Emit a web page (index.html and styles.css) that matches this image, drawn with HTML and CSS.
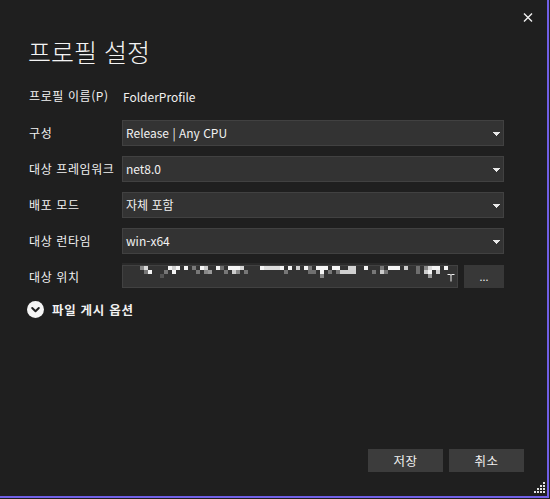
FILE: index.html
```html
<!DOCTYPE html>
<html lang="ko">
<head>
<meta charset="utf-8">
<title>프로필 설정</title>
<link rel="stylesheet" href="styles.css">
</head>
<body>
<div class="frame">
  <div class="topbar">
    <button class="close" aria-label="닫기">
      <svg width="10" height="9" viewBox="0 0 10 9"><path d="M1 0.5 L9 8.5 M9 0.5 L1 8.5" stroke="#f0f0f0" stroke-width="1.4" fill="none"/></svg>
    </button>
  </div>
  <h1 class="title">프로필 설정</h1>
  <div class="form">
    <div class="row row-name">
      <span class="label">프로필 이름(P)</span>
      <span class="value">FolderProfile</span>
    </div>
    <div class="row">
      <span class="label">구성</span>
      <div class="select"><span class="sel-text">Release | Any CPU</span><svg class="arrow" width="7" height="4" viewBox="0 0 7 4"><path d="M0 0 H7 V1 H6 V2 H5 V3 H4 V4 H3 V3 H2 V2 H1 V1 H0 Z" fill="#e8e8e8"/></svg></div>
    </div>
    <div class="row">
      <span class="label">대상 프레임워크</span>
      <div class="select"><span class="sel-text">net8.0</span><svg class="arrow" width="7" height="4" viewBox="0 0 7 4"><path d="M0 0 H7 V1 H6 V2 H5 V3 H4 V4 H3 V3 H2 V2 H1 V1 H0 Z" fill="#e8e8e8"/></svg></div>
    </div>
    <div class="row">
      <span class="label">배포 모드</span>
      <div class="select"><span class="sel-text">자체 포함</span><svg class="arrow" width="7" height="4" viewBox="0 0 7 4"><path d="M0 0 H7 V1 H6 V2 H5 V3 H4 V4 H3 V3 H2 V2 H1 V1 H0 Z" fill="#e8e8e8"/></svg></div>
    </div>
    <div class="row">
      <span class="label">대상 런타임</span>
      <div class="select"><span class="sel-text">win-x64</span><svg class="arrow" width="7" height="4" viewBox="0 0 7 4"><path d="M0 0 H7 V1 H6 V2 H5 V3 H4 V4 H3 V3 H2 V2 H1 V1 H0 Z" fill="#e8e8e8"/></svg></div>
    </div>
    <div class="row row-loc">
      <span class="label">대상 위치</span>
      <div class="loc-field">
        <div class="loc-wrap">
          <div class="textbox">
            <svg class="ibeam" width="8" height="8" viewBox="0 0 8 8"><path d="M0.5 0.5 H3 M5 0.5 H7.5 M3 0.5 Q4 0.5 4 1.5 Q4 0.5 5 0.5 M4 1.5 V7.5" stroke="#f0f0f0" stroke-width="1" fill="none"/></svg>
          </div>
          <svg class="mosaic" width="326" height="16" viewBox="122 264 326 16">
            <rect x="122" y="264" width="326" height="2" fill="#2a2a2a"/>
            <g fill="#f4f4f4">
              <rect x="144" y="267" width="4" height="4" fill="#d8d8d8"/>
              <rect x="140" y="267" width="4" height="4" fill="#8a8a8a"/>
              <rect x="168" y="267" width="4" height="4"/>
              <rect x="172" y="267" width="4" height="4" fill="#cfcfcf"/>
              <rect x="176" y="267" width="4" height="4"/>
              <rect x="184" y="267" width="4" height="4"/>
              <rect x="192" y="267" width="4" height="4" fill="#7a7a7a"/>
              <rect x="200" y="267" width="4" height="4"/>
              <rect x="204" y="267" width="4" height="4" fill="#cccccc"/>
              <rect x="216" y="267" width="4" height="4"/>
              <rect x="220" y="267" width="4" height="4" fill="#6e6e6e"/>
              <rect x="228" y="267" width="12" height="4"/>
              <rect x="240" y="267" width="4" height="4" fill="#d6d6d6"/>
              <rect x="260" y="267" width="4" height="4"/>
              <rect x="264" y="267" width="16" height="4" fill="#dcdcdc"/>
              <rect x="280" y="267" width="4" height="4"/>
              <rect x="288" y="267" width="4" height="4"/>
              <rect x="296" y="267" width="4" height="4" fill="#cfcfcf"/>
              <rect x="304" y="267" width="4" height="4"/>
              <rect x="308" y="267" width="4" height="4" fill="#7a7a7a"/>
              <rect x="316" y="267" width="12" height="4"/>
              <rect x="332" y="267" width="8" height="4"/>
              <rect x="348" y="267" width="8" height="4" fill="#d4d4d4"/>
              <rect x="364" y="267" width="4" height="4"/>
              <rect x="380" y="267" width="4" height="4" fill="#777777"/>
              <rect x="388" y="267" width="12" height="4"/>
              <rect x="404" y="267" width="4" height="4" fill="#cccccc"/>
              <rect x="416" y="267" width="4" height="4" fill="#6e6e6e"/>
              <rect x="424" y="267" width="4" height="4" fill="#888888"/>
              <rect x="428" y="267" width="4" height="4" fill="#dddddd"/>
              <rect x="432" y="267" width="8" height="4"/>
              <rect x="444" y="267" width="4" height="4"/>
              <rect x="144" y="271" width="4" height="4" fill="#777777"/>
              <rect x="148" y="271" width="4" height="4"/>
              <rect x="164" y="271" width="4" height="4" fill="#777777"/>
              <rect x="172" y="271" width="4" height="4"/>
              <rect x="196" y="271" width="4" height="4" fill="#777777"/>
              <rect x="204" y="271" width="4" height="4" fill="#888888"/>
              <rect x="208" y="271" width="4" height="4" fill="#999999"/>
              <rect x="224" y="271" width="4" height="4" fill="#777777"/>
              <rect x="232" y="271" width="4" height="4" fill="#cccccc"/>
              <rect x="236" y="271" width="4" height="4" fill="#888888"/>
              <rect x="244" y="271" width="4" height="4" fill="#777777"/>
              <rect x="284" y="271" width="4" height="4" fill="#777777"/>
              <rect x="308" y="271" width="8" height="4" fill="#707070"/>
              <rect x="320" y="271" width="4" height="4"/>
              <rect x="328" y="271" width="4" height="4" fill="#777777"/>
              <rect x="336" y="271" width="4" height="4" fill="#777777"/>
              <rect x="340" y="271" width="16" height="4" fill="#d0d0d0"/>
              <rect x="372" y="271" width="4" height="4" fill="#777777"/>
              <rect x="380" y="271" width="4" height="4" fill="#cccccc"/>
              <rect x="384" y="271" width="4" height="4" fill="#777777"/>
              <rect x="416" y="271" width="4" height="4" fill="#6e6e6e"/>
              <rect x="424" y="271" width="4" height="4" fill="#cccccc"/>
              <rect x="428" y="271" width="4" height="4"/>
              <rect x="436" y="271" width="4" height="4" fill="#d0d0d0"/>
              <rect x="160" y="275" width="4" height="4" fill="#555555"/>
              <rect x="320" y="275" width="4" height="4" fill="#888888"/>
              <rect x="428" y="275" width="4" height="4" fill="#999999"/>
            </g>
          </svg>
        </div>
        <button class="browse">...</button>
      </div>
    </div>
    <div class="expander">
      <svg class="chev" width="17" height="17" viewBox="0 0 17 17"><circle cx="8.5" cy="8.5" r="8.5" fill="#f4f4f4"/><path d="M5.2 7 L8.5 10.2 L11.8 7" stroke="#1f1f1f" stroke-width="2" fill="none" stroke-linecap="round" stroke-linejoin="round"/></svg>
      <span class="exp-text">파일 게시 옵션</span>
    </div>
  </div>
  <div class="footer">
    <button class="btn">저장</button>
    <button class="btn">취소</button>
  </div>
  <svg class="grip" width="12" height="12" viewBox="0 0 12 12">
    <g fill="#e0e0e0">
      <rect x="9" y="0" width="2" height="2"/>
      <rect x="6" y="3" width="2" height="2"/><rect x="9" y="3" width="2" height="2"/>
      <rect x="3" y="6" width="2" height="2"/><rect x="6" y="6" width="2" height="2"/><rect x="9" y="6" width="2" height="2"/>
      <rect x="0" y="9" width="2" height="2"/><rect x="3" y="9" width="2" height="2"/><rect x="6" y="9" width="2" height="2"/><rect x="9" y="9" width="2" height="2"/>
    </g>
  </svg>
</div>
</body>
</html>
```
FILE: styles.css
```css
* { box-sizing: border-box; }
html, body {
  margin: 0;
  padding: 0;
  background: #1f1f1f;
  width: 550px;
  height: 499px;
  overflow: hidden;
}
body {
  font-family: "Noto Sans CJK KR", "Noto Sans", sans-serif;
  color: #f1f1f1;
  font-size: 12px;
}
.frame {
  position: relative;
  width: 549px;
  height: 498px;
  border-right: 2px solid #7160e6;
  border-bottom: 2px solid #7160e6;
  display: flex;
  flex-direction: column;
}
.topbar {
  display: flex;
  justify-content: flex-end;
  padding: 12px 13px 0 0;
  height: 22px;
}
.close {
  width: 12px;
  height: 10px;
  padding: 0;
  border: 0;
  background: transparent;
  display: flex;
  align-items: center;
  justify-content: center;
}
.title {
  margin: 13px 0 0 28px;
  font-size: 25px;
  font-weight: 300;
  line-height: 32px;
  letter-spacing: 0;
  color: #f4f4f4;
}
.form {
  display: flex;
  flex-direction: column;
  padding-left: 29px;
  margin-top: 19px;
}
.row {
  display: grid;
  grid-template-columns: 93px 382px;
  align-items: center;
  height: 26px;
  margin-bottom: 10px;
}
.row-name {
  height: 20px;
  margin-bottom: 14px;
}
.label {
  font-size: 12px;
  line-height: 16px;
  letter-spacing: 0.6px;
  white-space: nowrap;
}
.value {
  font-size: 12px;
  padding-left: 1px;
}
.select {
  height: 26px;
  background: #333333;
  border: 1px solid #414141;
  display: flex;
  align-items: center;
  justify-content: space-between;
  padding: 0 3px 0 3px;
}
.sel-text {
  font-size: 12px;
  line-height: 16px;
  color: #f1f1f1;
}
.arrow {
  margin-top: 1px;
}
.row-loc {
  height: 23px;
  margin-top: 1px;
  margin-bottom: 12px;
}
.loc-field {
  display: flex;
  gap: 6px;
  height: 23px;
}
.loc-wrap {
  position: relative;
  width: 336px;
  height: 23px;
}
.textbox {
  height: 23px;
  background: #333333;
  border: 1px solid #414141;
  display: flex;
  align-items: center;
  justify-content: flex-end;
  padding-right: 2px;
}
.ibeam {
  margin-top: 3px;
}
.mosaic {
  position: absolute;
  left: 0;
  top: -2px;
}
.browse {
  height: 23px;
  width: 40px;
  background: #383838;
  border: 0;
  color: #f1f1f1;
  font-family: "Noto Sans", sans-serif;
  font-size: 11px;
  padding: 0 0 6px 0;
  display: flex;
  align-items: flex-end;
  justify-content: center;
  line-height: 1;
}
.expander {
  display: flex;
  align-items: center;
  gap: 8px;
  margin-left: -2px;
  height: 18px;
}
.exp-text {
  font-weight: 700;
  font-size: 12.5px;
  letter-spacing: 0.7px;
}
.footer {
  margin-top: auto;
  display: flex;
  justify-content: flex-end;
  gap: 6px;
  padding: 0 23px 24px 0;
}
.btn {
  width: 75px;
  height: 23px;
  background: #3c3c3c;
  border: 0;
  color: #f1f1f1;
  font-family: "Noto Sans CJK KR", sans-serif;
  font-size: 12.5px;
  letter-spacing: 0.5px;
  padding: 0;
}
.grip {
  position: absolute;
  right: 1px;
  bottom: 2px;
}
```
